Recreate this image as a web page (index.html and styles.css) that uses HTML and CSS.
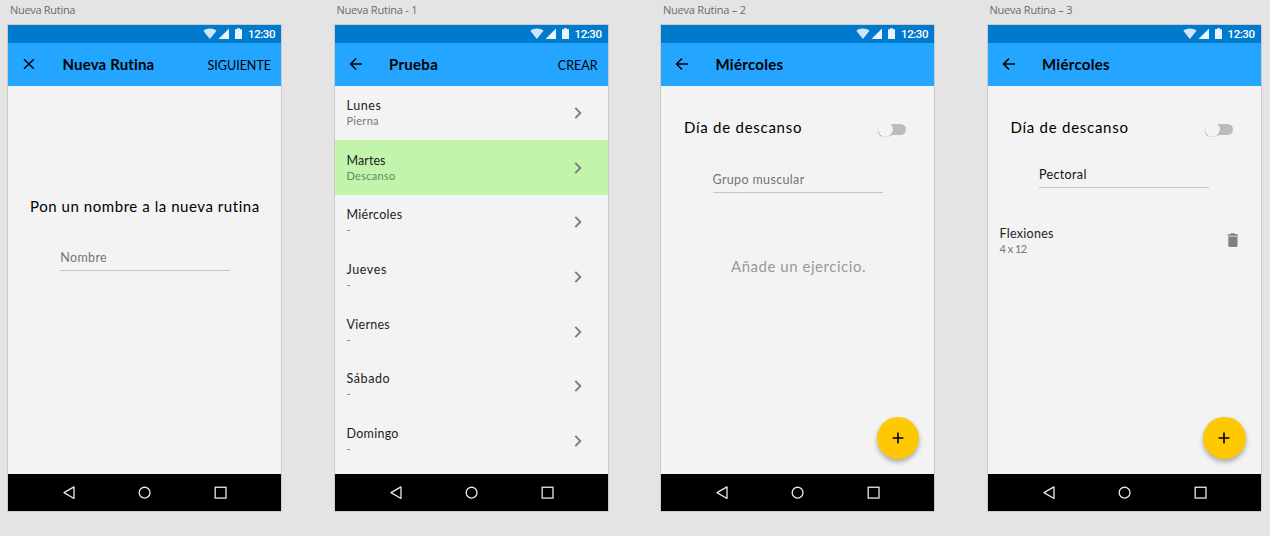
FILE: index.html
```
<!DOCTYPE html>
<html lang="es">
<head>
<meta charset="utf-8">
<title>Nueva Rutina</title>
<link rel="stylesheet" href="styles.css">
</head>
<body>
<svg class="defs" width="0" height="0">
  <symbol id="status" viewBox="0 0 42 12">
    <path d="M.3 2.7C3.800-.1 10-.1 13.500 2.700L6.900 11z" fill="#d0e6f6"/>
    <path d="M26 .5V11H15.500z" fill="#e9f4fc"/>
    <path d="M32 1.200h2V.3h3v.9h2V11h-7z" fill="#e9f4fc"/>
  </symbol>
  <symbol id="back" viewBox="0 0 14 14"><path d="M13 7H1.700M7 1.500 1.500 7 7 12.500" fill="none" stroke="#000" stroke-width="1.500"/></symbol>
  <symbol id="close" viewBox="0 0 14 14"><path d="m2 2.200 9.800 9.600M11.800 2.200 2 11.800" fill="none" stroke="#000" stroke-width="1.500"/></symbol>
  <symbol id="chevron" viewBox="0 0 8 12"><path d="m1.300.9 5 5.100-5 5.100" fill="none" stroke="#7d7d7d" stroke-width="1.900"/></symbol>
  <symbol id="plus" viewBox="0 0 12 12"><path d="M6 .6v10.800M.6 6h10.800" stroke="#000" stroke-width="1.600"/></symbol>
  <symbol id="trash" viewBox="0 0 12 14"><path d="M.6 1.200h2.700L4.100.3h3.400l.8.900H11v1.500H.6zM1.300 3.500h9.200v9q0 1.400-1.400 1.400H2.700q-1.400 0-1.400-1.400z" fill="#808080"/></symbol>
  <symbol id="nav" viewBox="0 0 273 36">
    <g fill="none" stroke="#e8e8e8" stroke-width="1.300">
      <path d="M66 12.600v11.600L56 18.400z" stroke-linejoin="round"/>
      <circle cx="136.600" cy="18.400" r="5.400"/>
      <rect x="207.200" y="13" width="10.800" height="10.800"/>
    </g>
  </symbol>
</svg>
<main class="canvas">
  <section class="artboard">
    <h2 class="label">Nueva Rutina</h2>
    <div class="phone">
      <div class="statusbar"><svg class="status-icons"><use href="#status"/></svg><span class="time">12:30</span></div>
      <header class="appbar"><svg class="lead"><use href="#close"/></svg><span class="title title-long">Nueva Rutina</span><span class="action">SIGUIENTE</span></header>
      <div class="content">
        <p class="prompt">Pon un nombre a la nueva rutina</p>
        <div class="field field-name">Nombre</div>
      </div>
      <svg class="navbar"><use href="#nav"/></svg>
    </div>
  </section>

  <section class="artboard">
    <h2 class="label label-numbered">Nueva Rutina - 1</h2>
    <div class="phone">
      <div class="statusbar"><svg class="status-icons"><use href="#status"/></svg><span class="time">12:30</span></div>
      <header class="appbar"><svg class="lead"><use href="#back"/></svg><span class="title">Prueba</span><span class="action">CREAR</span></header>
      <div class="content">
        <div class="days">
          <div class="row"><div><div class="name wide">Lunes</div><div class="sub">Pierna</div></div><svg class="chevron"><use href="#chevron"/></svg></div>
          <div class="row rest"><div><div class="name tight">Martes</div><div class="sub">Descanso</div></div><svg class="chevron"><use href="#chevron"/></svg></div>
          <div class="row"><div><div class="name">Miércoles</div><div class="sub">-</div></div><svg class="chevron"><use href="#chevron"/></svg></div>
          <div class="row"><div><div class="name wide">Jueves</div><div class="sub">-</div></div><svg class="chevron"><use href="#chevron"/></svg></div>
          <div class="row"><div><div class="name">Viernes</div><div class="sub">-</div></div><svg class="chevron"><use href="#chevron"/></svg></div>
          <div class="row"><div><div class="name wide">Sábado</div><div class="sub">-</div></div><svg class="chevron"><use href="#chevron"/></svg></div>
          <div class="row"><div><div class="name">Domingo</div><div class="sub">-</div></div><svg class="chevron"><use href="#chevron"/></svg></div>
        </div>
      </div>
      <svg class="navbar"><use href="#nav"/></svg>
    </div>
  </section>

  <section class="artboard">
    <h2 class="label label-numbered">Nueva Rutina – 2</h2>
    <div class="phone">
      <div class="statusbar"><svg class="status-icons"><use href="#status"/></svg><span class="time">12:30</span></div>
      <header class="appbar"><svg class="lead"><use href="#back"/></svg><span class="title">Miércoles</span></header>
      <div class="content">
        <div class="rest-toggle"><span>Día de descanso</span><span class="switch"><span class="knob"></span></span></div>
        <div class="field field-group">Grupo muscular</div>
        <p class="empty">Añade un ejercicio.</p>
      </div>
      <svg class="navbar"><use href="#nav"/></svg>
      <div class="fab"><svg class="plus"><use href="#plus"/></svg></div>
    </div>
  </section>

  <section class="artboard">
    <h2 class="label label-numbered">Nueva Rutina – 3</h2>
    <div class="phone">
      <div class="statusbar"><svg class="status-icons"><use href="#status"/></svg><span class="time">12:30</span></div>
      <header class="appbar"><svg class="lead"><use href="#back"/></svg><span class="title">Miércoles</span></header>
      <div class="content">
        <div class="rest-toggle"><span>Día de descanso</span><span class="switch"><span class="knob"></span></span></div>
        <div class="field field-filled">Pectoral</div>
        <div class="exercise"><div><div class="name">Flexiones</div><div class="sub sets">4 x 12</div></div><svg class="trash"><use href="#trash"/></svg></div>
      </div>
      <svg class="navbar"><use href="#nav"/></svg>
      <div class="fab"><svg class="plus"><use href="#plus"/></svg></div>
    </div>
  </section>
</main>
</body>
</html>
```
FILE: styles.css
```
* { box-sizing: border-box; }
body {
  margin: 0;
  height: 536px;
  overflow: hidden;
  background: #e4e4e4;
  font-family: Lato, "Open Sans", sans-serif;
  font-variant-ligatures: none;
  color: #000;
}
.defs { position: absolute; }
svg { display: block; flex: none; }
p { margin: 0; }

.canvas {
  display: flex;
  gap: 53.5px;
  padding-left: 8px;
}
.artboard { width: 273px; flex: none; }
.label {
  margin: 0;
  padding-left: 2px;
  height: 25px;
  font: 400 11px/20px "Open Sans", sans-serif;
  letter-spacing: -.3px;
  color: #6b6b6b;
}
.label-numbered { letter-spacing: -.22px; }
.phone {
  position: relative;
  display: flex;
  flex-direction: column;
  height: 485.5px;
  background: #f3f3f3;
  box-shadow: 0 0 0 1px #cbcbcb;
}
.statusbar {
  display: flex;
  align-items: center;
  justify-content: flex-end;
  height: 18px;
  padding-right: 6px;
  background: #007acc;
}
.status-icons { width: 42px; height: 12px; }
.time {
  width: 28px;
  margin-left: 2px;
  font: 500 11.5px/18px Roboto, sans-serif;
  letter-spacing: -.45px;
  text-align: right;
  color: #fff;
}
.appbar {
  display: flex;
  align-items: center;
  height: 42.5px;
  padding: 0 10px 0 14px;
  background: #24a5ff;
}
.lead { width: 14px; height: 14px; }
.title {
  margin-left: 26.5px;
  font-size: 15px;
  font-weight: 700;
  letter-spacing: .28px;
}
.title-long { letter-spacing: .16px; }
.action {
  margin-left: auto;
  padding-top: 3px;
  font-size: 12.5px;
}
.content { flex: 1; min-height: 0; }
.navbar {
  width: 273px;
  height: 36.5px;
  background: #000;
}

.prompt {
  padding: 110px 0 0 22px;
  font-size: 15px;
  line-height: 20px;
  letter-spacing: .557px;
  white-space: nowrap;
}
.field {
  width: 170px;
  height: 22px;
  margin-left: 51.5px;
  border-bottom: 1px solid #c4c4c4;
  font-size: 12.5px;
  line-height: 18px;
  letter-spacing: .35px;
  color: #757575;
}
.field-name { margin-top: 33px; margin-left: 52.3px; }
.field-group { margin-top: 33.5px; }
.field-filled { margin-top: 29px; color: #111; }

.row {
  display: flex;
  justify-content: space-between;
  height: 54.65px;
  padding: 11.5px 25.5px 0 12px;
}
.rest { background: #c2f5ab; }
.days { border-bottom: 1px solid #f5f3dc; }
.name {
  font-size: 12.5px;
  line-height: 17px;
  letter-spacing: .28px;
  color: #222;
}
.wide { letter-spacing: .6px; }
.tight { letter-spacing: .07px; }
.sub {
  font-size: 11px;
  line-height: 13px;
  letter-spacing: .28px;
  color: #777;
}
.rest .sub { color: #668b5c; }
.sets { letter-spacing: -.5px; }
.chevron { width: 8px; height: 12px; margin-top: 10px; }

.rest-toggle {
  display: flex;
  align-items: center;
  height: 20px;
  margin: 31.5px 28px 0 23px;
  font-size: 15px;
  letter-spacing: .74px;
}
.switch {
  position: relative;
  width: 24px;
  height: 11px;
  margin: 5.5px 0 0 auto;
  border-radius: 6px;
  background: #bcbcbc;
}
.knob {
  position: absolute;
  left: -4px;
  top: -2px;
  width: 15px;
  height: 15px;
  border-radius: 50%;
  background: #f3f3f3;
  box-shadow: 0 1px 1px #999;
  clip-path: inset(0 -2px 1px -2px);
}
.empty {
  margin: 63px 0 0 70px;
  font-size: 15px;
  line-height: 20px;
  letter-spacing: .536px;
  color: #999;
}
.exercise {
  display: flex;
  justify-content: space-between;
  padding: 37px 21.5px 0 12px;
}
.trash { width: 12px; height: 14px; margin-top: 8px; }
.fab {
  position: absolute;
  right: 15px;
  bottom: 51.5px;
  display: grid;
  place-items: center;
  width: 42.5px;
  height: 42.5px;
  border-radius: 50%;
  background: #ffc805;
  box-shadow: 0 3px 5px rgba(0, 0, 0, .3);
}
.plus { width: 12px; height: 12px; }
```
